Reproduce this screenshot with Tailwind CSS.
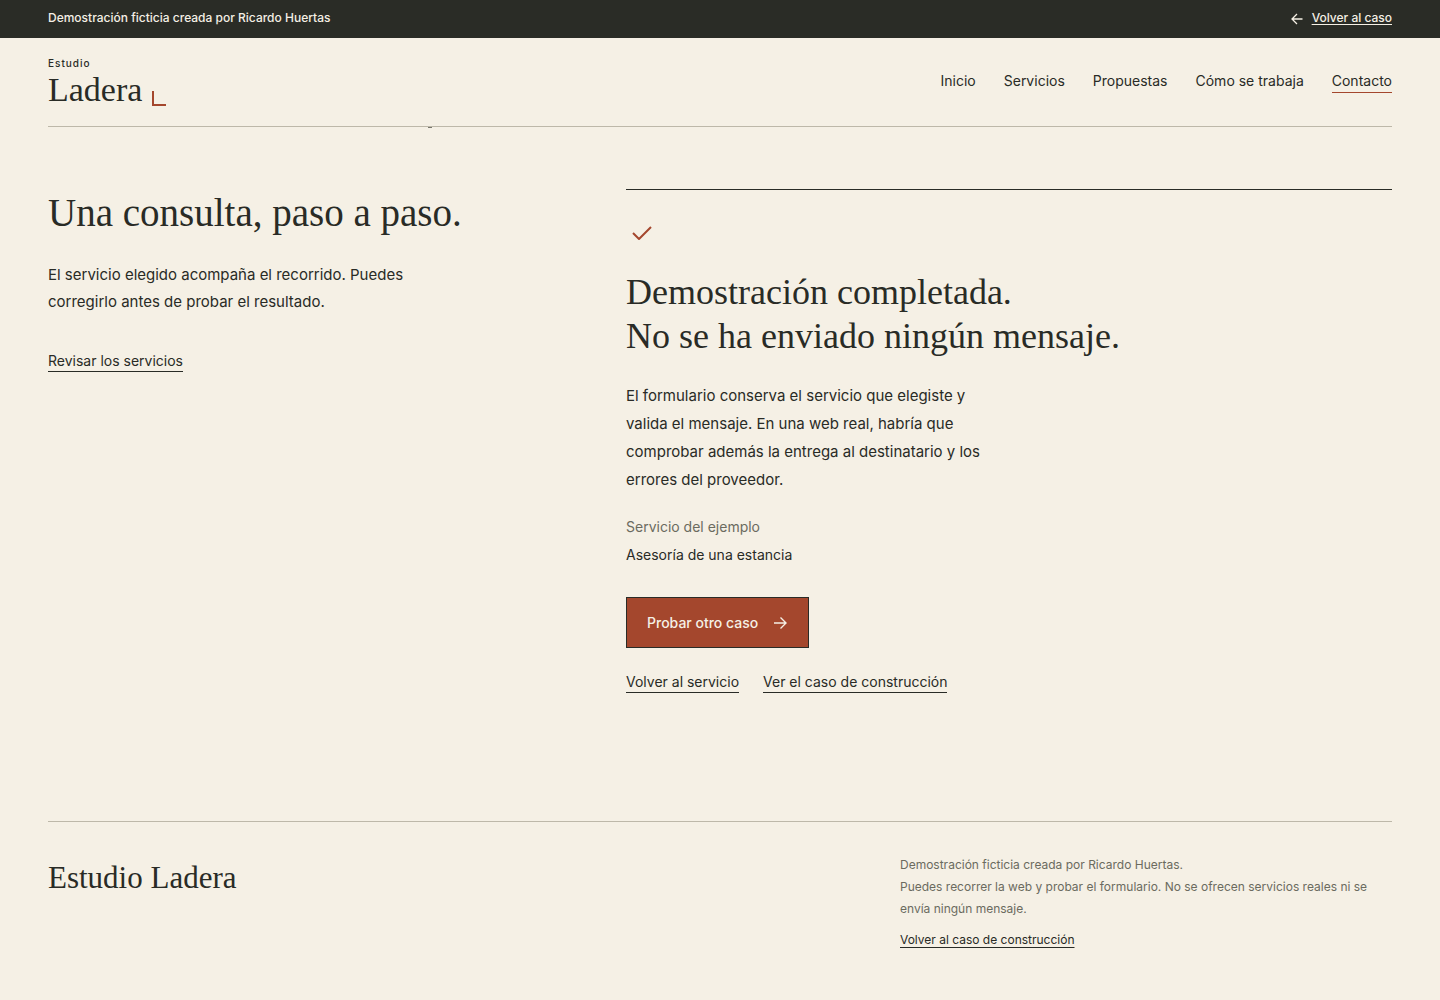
<!DOCTYPE html>
<html lang="es">
<head>
<meta charset="utf-8">
<meta name="viewport" content="width=device-width, initial-scale=1">
<title>Contacto | Estudio Ladera</title>
<script src="https://cdn.jsdelivr.net/npm/@tailwindcss/browser@4"></script>
</head>
<body class="min-h-screen bg-[#f5f0e5] font-['Inter',sans-serif] text-[15px] text-[#292b26]">
<div class="bg-[#2a2c26] text-[#f5f0e5]">
  <div class="mx-12 flex h-[38px] items-center justify-between pb-0.5 text-xs font-medium">
    <p>Demostración ficticia creada por Ricardo Huertas</p>
    <a href="#" class="flex items-center gap-2">
      <svg class="mt-0.5 size-3.5" viewBox="0 0 14 14" fill="none" stroke="currentColor" stroke-width="1.3"><path d="M12.5 7H2M7 2 2 7l5 5"/></svg>
      <span class="underline underline-offset-2">Volver al caso</span>
    </a>
  </div>
</div>
<header class="relative mx-12 flex h-[89px] items-center justify-between border-b border-[#bdb8a9]">
  <a href="#" class="flex flex-col pt-0.5">
    <span class="text-[10px] leading-3 font-medium tracking-widest">Estudio</span>
    <span class="flex items-end gap-2.5 pt-px font-['Liberation_Serif',serif] text-[34px] leading-10">Ladera
      <span class="mb-1 h-[15px] w-3.5 border-b-2 border-l-2 border-[#a4472d]"></span>
    </span>
  </a>
  <nav class="flex gap-7 pb-0.5 text-sm leading-[22px]">
    <a href="#" class="border-b border-transparent">Inicio</a>
    <a href="#" class="border-b border-transparent">Servicios</a>
    <a href="#" class="border-b border-transparent">Propuestas</a>
    <a href="#" class="border-b border-transparent">Cómo se trabaja</a>
    <a href="#" aria-current="page" class="border-b border-[#a4472d]">Contacto</a>
  </nav>
  <span class="absolute -bottom-0.5 left-[380px] h-px w-1 bg-[#77766c]"></span>
</header>
<main class="mx-12 grid grid-cols-[482fr_766fr] gap-24 pt-[62px] pb-32">
  <section>
    <h2 class="font-['Liberation_Serif',serif] text-[39px] leading-12">Una consulta, paso a paso.</h2>
    <p class="mt-6 max-w-96 leading-[27px]">El servicio elegido acompaña el recorrido. Puedes corregirlo antes de probar el resultado.</p>
    <a href="#" class="mt-9 inline-block border-b border-current text-sm leading-5">Revisar los servicios</a>
  </section>
  <section class="border-t border-[#292b26] pt-[27px]">
    <svg class="size-8 text-[#a4472d]" viewBox="0 0 32 32" fill="none" stroke="currentColor" stroke-width="2" stroke-linejoin="round"><path d="m7 16 6 6L25 10"/></svg>
    <h1 class="mt-[21px] font-['Liberation_Serif',serif] text-4xl leading-11">Demostración completada.<br>No se ha enviado ningún mensaje.</h1>
    <p class="mt-6 max-w-96 leading-7">El formulario conserva el servicio que elegiste y valida el mensaje. En una web real, habría que comprobar además la entrega al destinatario y los errores del proveedor.</p>
    <dl class="mt-[19px] text-sm leading-7">
      <dt class="text-[#6b6b5f]">Servicio del ejemplo</dt>
      <dd>Asesoría de una estancia</dd>
    </dl>
    <button type="button" class="mt-7 flex h-[51px] items-center gap-3.5 border border-[#292b26] bg-[#a4472d] px-5 text-sm font-medium text-[#f5f0e5]">Probar otro caso
      <svg class="size-4" viewBox="0 0 16 16" fill="none" stroke="currentColor" stroke-width="1.4"><path d="M2 8h12M8.500 2.500 14 8l-5.500 5.500"/></svg>
    </button>
    <div class="mt-6 flex gap-6 text-sm leading-5">
      <a href="#" class="border-b border-current">Volver al servicio</a>
      <a href="#" class="border-b border-current">Ver el caso de construcción</a>
    </div>
  </section>
</main>
<footer class="mx-12 grid grid-cols-[852fr_492fr] border-t border-[#bdb8a9] pt-8 pb-12">
  <p class="pt-1 font-['Liberation_Serif',serif] text-[31px] leading-10">Estudio Ladera</p>
  <div class="text-xs leading-[22px] text-[#6b6b5f]">
    <p>Demostración ficticia creada por Ricardo Huertas.<br>Puedes recorrer la web y probar el formulario. No se ofrecen servicios reales ni se envía ningún mensaje.</p>
    <a href="#" class="mt-3 inline-block text-[#292b26] underline underline-offset-3 leading-4">Volver al caso de construcción</a>
  </div>
</footer>
</body>
</html>
